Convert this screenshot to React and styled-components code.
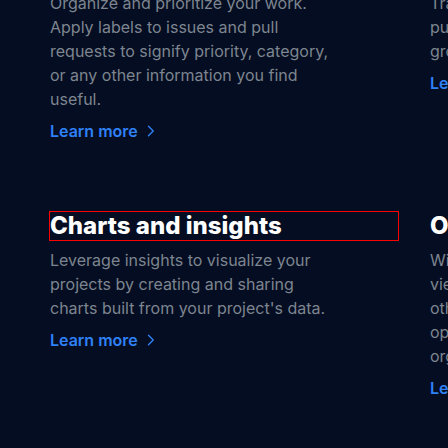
import React from "react";
import styled, { createGlobalStyle } from "styled-components";

const Global = createGlobalStyle`
  html, body {
    margin: 0;
    padding: 0;
    background: #040d21;
    overflow: hidden;
  }
  body {
    font-family: Inter, "Noto Sans", sans-serif;
    -webkit-font-smoothing: antialiased;
  }
`;

const Page = styled.div`
  width: 448px;
  height: 448px;
  overflow: hidden;
  background: #040d21;
`;

const Grid = styled.div`
  display: grid;
  grid-template-columns: repeat(3, 348px);
  column-gap: 32px;
  row-gap: 69px;
  padding-left: 50px;
  margin-top: -45px;
`;

const Feature = styled.div`
  display: flex;
  flex-direction: column;
  align-items: flex-start;
`;

const Title = styled.h3`
  margin: 0;
  align-self: stretch;
  font-size: 24px;
  line-height: 28px;
  font-weight: 800;
  color: #ffffff;
  outline: ${(p) => (p.$focused ? "1px solid #ff0000" : "none")};
`;

const Body = styled.p`
  margin: 8px 0 0;
  max-width: 280px;
  font-size: 16px;
  line-height: 24px;
  font-weight: 400;
  color: #7d8590;
  white-space: ${(p) => (p.$pre ? "pre-line" : "normal")};
`;

const Link = styled.a`
  margin-top: 8px;
  display: inline-flex;
  align-items: center;
  gap: 7px;
  font-size: 16px;
  line-height: 24px;
  font-weight: 600;
  color: #2f81f7;
  text-decoration: none;
  svg {
    display: block;
  }
`;

const Chevron = () => (
  <svg width="12" height="16" viewBox="0 0 12 16" fill="none">
    <path d="M3.5 3.3L8.2 8L3.5 12.7" stroke="#2f81f7" strokeWidth="1.4" strokeLinecap="round" strokeLinejoin="round" />
  </svg>
);

const features = [
  {
    title: "Labels",
    body: "Organize and prioritize your work. Apply labels to issues and pull requests to signify priority, category, or any other information you find useful.",
  },
  {
    title: "Milestones",
    body: "Track progress on groups of issues\npull requests in a repository, and\ngroups to overall project goals.",
    pre: true,
  },
  {
    title: "Assignees",
    body: "Assign issues and pull requests to team members so everyone knows who is responsible.",
  },
  {
    title: "Charts and insights",
    body: "Leverage insights to visualize your projects by creating and sharing charts built from your project's data.",
    focused: true,
  },
  {
    title: "Offline projects",
    body: "Wire up automations to keep your\nviews in sync with issues, and\nother tools so that your team stays\nopen, aligned and up to date across\norganizations.",
    pre: true,
  },
  {
    title: "Custom fields",
    body: "Track metadata like iterations, priority, and estimates.",
  },
];

export default function App() {
  return (
    <Page>
      <Global />
      <Grid>
        {features.map((f) => (
          <Feature key={f.title}>
            <Title $focused={f.focused}>{f.title}</Title>
            <Body $pre={f.pre}>{f.body}</Body>
            <Link href="#">
              Learn more
              <Chevron />
            </Link>
          </Feature>
        ))}
      </Grid>
    </Page>
  );
}
